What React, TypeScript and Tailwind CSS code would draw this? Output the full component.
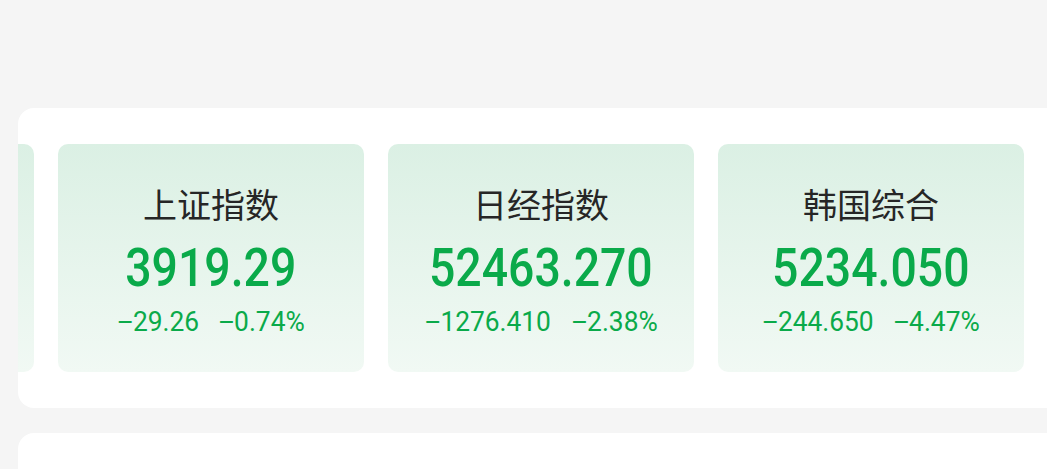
import React from 'react';

type IndexItem = {
  name: string;
  price: string;
  change: string;
  percent: string;
};

const indices: IndexItem[] = [
  { name: '深证成指', price: '13156.42', change: '95.91', percent: '0.72%' },
  { name: '上证指数', price: '3919.29', change: '29.26', percent: '0.74%' },
  { name: '日经指数', price: '52463.270', change: '1276.410', percent: '2.38%' },
  { name: '韩国综合', price: '5234.050', change: '244.650', percent: '4.47%' },
];

// the minus glyph in Roboto is too short, borrow a wider one
const Minus = () => <span className="font-['Liberation_Sans',sans-serif]">−</span>;

const IndexCard = ({ item }: { item: IndexItem }) => (
  <div className="flex h-[228px] w-[306px] shrink-0 flex-col items-center rounded-[10px] bg-gradient-to-b from-[#dbf0e4] to-[#f1f9f4]">
    <div className="mt-[40px] h-[40px] font-['Noto_Sans_CJK_SC',sans-serif] text-[34px] leading-[40px] text-[#262626]">
      {item.name}
    </div>
    <div className="mt-[14px] h-[60px] font-['Roboto',sans-serif] text-[53px] font-medium leading-[60px] text-[#0aaa4a]">
      <span className="inline-block scale-x-[0.875]">{item.price}</span>
    </div>
    <div className="mt-[7px] flex h-[34px] items-center gap-[14px] font-['Roboto',sans-serif] text-[28px] leading-[34px] text-[#0aaa4a]">
      <span className="inline-block scale-x-[0.94]">
        <Minus />
        {item.change}
      </span>
      <span className="inline-block scale-x-[0.94]">
        <Minus />
        {item.percent}
      </span>
    </div>
  </div>
);

export default function App() {
  return (
    <div className="h-[469px] w-full overflow-hidden bg-[#f5f5f5] pl-[18px] pt-[108px]">
      <section className="w-[1100px] overflow-hidden rounded-2xl bg-white py-9">
        <div className="-ml-[290px] flex gap-6">
          {indices.map((item) => (
            <IndexCard key={item.name} item={item} />
          ))}
        </div>
      </section>
      <section className="mt-[25px] h-[80px] w-[1100px] rounded-2xl bg-white" />
    </div>
  );
}
